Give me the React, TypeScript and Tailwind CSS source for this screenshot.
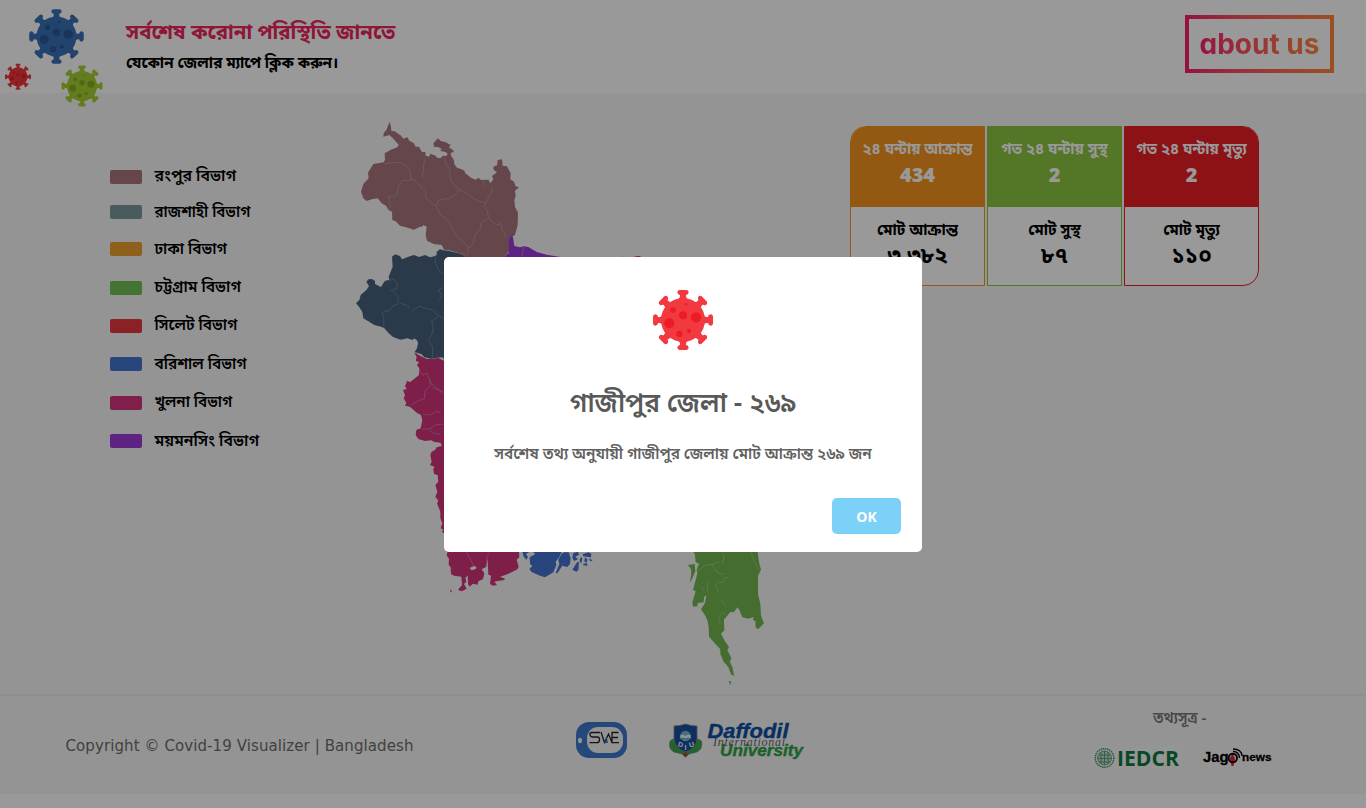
import React from 'react';

type VirusProps = { cx: number; cy: number; size: number; body: string; spot: string };

function Virus({ cx, cy, size, body, spot }: VirusProps) {
  return (
    <g transform={`translate(${cx} ${cy}) scale(${size / 180})`}>
      {[0, 45, 90, 135, 180, 225, 270, 315].map((a) => (
        <g key={a} transform={`rotate(${a})`} fill={body}>
          <rect x={-8} y={-82} width={16} height={28} />
          <path d="M-11 -90H11Q17 -89 17 -82Q16 -76 9 -75Q8 -68 13 -62H-13Q-8 -68 -9 -75Q-16 -76 -17 -82Q-17 -89 -11 -90Z" />
        </g>
      ))}
      <circle r={66} fill={body} />
      <g fill={spot}>
        <circle cx={-41} cy={10} r={15} />
        <circle cx={39} cy={-8} r={15.5} />
        <circle cx={0} cy={-14} r={12} />
        <circle cx={-30} cy={-30} r={8.5} />
        <circle cx={-11} cy={42} r={9.5} />
        <circle cx={18} cy={33} r={6.5} />
        <circle cx={9} cy={-47} r={4} />
      </g>
    </g>
  );
}

const bn = "font-['Noto_Sans_Bengali','Noto_Sans','Open_Sans',sans-serif]";

const legend = [
  { name: 'রংপুর বিভাগ', color: 'bg-[#a7757d]', row: 'h-[35px]', w: 'text-[15.8px]' },
  { name: 'রাজশাহী বিভাগ', color: 'bg-[#7b9899]', row: 'h-[36px]', w: 'text-[15.1px]' },
  { name: 'ঢাকা বিভাগ', color: 'bg-[#ee9e30]', row: 'h-[38.4px]', w: 'text-[15.4px]' },
  { name: 'চট্টগ্রাম বিভাগ', color: 'bg-[#73c054]', row: 'h-[38.4px]', w: 'text-[15.6px]' },
  { name: 'সিলেট বিভাগ', color: 'bg-[#e63a3e]', row: 'h-[38.4px]', w: 'text-[15.4px]' },
  { name: 'বরিশাল বিভাগ', color: 'bg-[#4373d0]', row: 'h-[38.4px]', w: 'text-[15.4px]' },
  { name: 'খুলনা বিভাগ', color: 'bg-[#d6357f]', row: 'h-[38.4px]', w: 'text-[15.2px]' },
  { name: 'ময়মনসিং বিভাগ', color: 'bg-[#9d39da]', row: 'h-[38.4px]', w: 'text-[15.8px]' },
];

const cards = [
  { t: '২৪ ঘন্টায় আক্রান্ত', n: '434', t2: 'মোট আক্রান্ত', n2: '৩,৩৮২', bg: 'bg-[#f59520]', border: 'border-[#f59520]', round: 'rounded-l-[16px]' },
  { t: 'গত ২৪ ঘন্টায় সুস্থ', n: '2', t2: 'মোট সুস্থ', n2: '৮৭', bg: 'bg-[#8cc641]', border: 'border-[#8cc641]', round: '' },
  { t: 'গত ২৪ ঘন্টায় মৃত্যু', n: '2', t2: 'মোট মৃত্যু', n2: '১১০', bg: 'bg-[#eb1e23]', border: 'border-[#eb1e23]', round: 'rounded-r-[16px]' },
];

function BangladeshMap() {
  return (
    <svg className="block h-[585px] w-[430px]" viewBox="345 110 430 585">
      <g transform="translate(345 110) scale(.33333)">
        <path fill="#a7757d" d="M134 35L138 50 139 63 150 64 160 72 166 75 175 86 187 82 193 92 207 100 212 110 222 110 231 127 241 125 242 137 252 140 256 131 272 137 276 143 286 145 294 137 304 138 308 132 302 126 286 123 290 117 281 112 267 110 265 100 272 92 279 85 287 93 303 97 311 102 317 104 312 112 325 121 326 127 317 128 319 139 327 150 328 163 336 173 350 178 358 182 361 190 380 205 393 209 400 203 408 210 430 209 436 220 445 208 441 198 456 187 446 180 445 170 456 166 458 150 471 148 473 167 486 169 497 190 496 208 507 215 512 229 522 232 510 242 512 258 508 270 510 290 519 308 518 345 510 375 502 380 497 376 492 390 492 425 478 440 470 450 340 450 339 428 310 420 297 419 290 405 266 402 246 392 242 375 245 350 235 345 232 350 225 350 207 359 180 351 165 347 152 334 142 330 141 305 130 300 124 288 110 280 98 265 80 268 65 273 55 265 48 245 55 222 71 205 69 188 85 162 116 157 120 150 119 130 136 120 157 112 161 105 153 95 143 84 133 75 115 80 116 70 124 60Z" />
        <path fill="#46627d" d="M275 425L285 418 295 421 310 422 340 430 360 440 360 744 297 748 292 742 270 744 258 746 238 742 230 733 209 726 216 715 219 700 217 692 208 685 203 690 187 685 168 689 158 686 143 680 130 668 118 655 108 650 88 645 70 634 55 625 52 606 42 590 33 580 43 570 47 555 64 540 72 529 64 515 70 508 81 507 90 513 90 522 108 531 115 520 120 512 133 510 131 500 139 480 143 470 141 440 150 433 165 438 171 448 190 440 207 435 222 441 240 435 255 442 268 439 275 435Z" />
        <path fill="#9d39da" d="M478 440L492 428 491 390 498 374 504 382 508 408 525 412 536 409 550 411 575 426 605 434 700 450 470 450Z" />
        <path fill="#e63535" d="M820 444L829 440 845 442 865 441 880 437 892 442 892 450 816 450Z" />
        <g fill="none" stroke="#c9afb4" strokeWidth="1.6">
          <path d="M120 161L145 157 170 159 184 169 195 181 199 208 210 212 222 221 233 238 241 245 242 263 256 277 274 289M199 208L190 212 171 212 160 229 158 249 149 260 130 260 137 285 134 299M239 145L235 178 232 203M298 142L303 162 316 177 312 190 319 213 333 229 343 240 356 245 389 267 405 275 424 279 430 263 442 244 438 229M343 238L330 254 316 265 281 270 274 289 286 314 311 333 320 354 333 375 355 395 370 411M424 279L416 290 426 300 431 323 407 340 409 354 390 376 385 396 379 410 368 412 372 426 364 434 342 430M431 323L444 338 457 345 467 340 471 360 480 370 482 387" />
          <path d="M536 410L531 440M416 207L414 227" />
        </g>
        <g fill="none" stroke="#8e9daa" strokeWidth="1.6">
          <path d="M133 512L145 507 157 518 155 536 136 542M142 542L160 560 157 570 167 580 190 588 193 596M160 580L143 589 135 601 111 607 117 629 116 654M202 602L224 589 245 596 268 601 275 614 297 626M273 440L270 458 282 482 295 492M295 532L280 540 291 558 281 570M280 620L260 633 265 654 260 676 250 690 263 710 262 743" />
        </g>
      </g>
      <g transform="translate(395 340) scale(.33333)">
        <path fill="#d0357a" d="M58 37L75 47 95 57 110 56 130 54 147 62 300 100 390 636 372 636 373 652 365 659 371 680 367 688 350 697 333 704 315 710 330 716 328 720 308 723 298 725 306 735 294 737 285 732 288 707 280 704 278 657 273 681 260 688 268 700 264 718 250 724 248 734 233 731 225 740 219 733 221 705 211 713 214 725 207 732 215 746 200 754 189 749 201 735 199 710 177 707 168 702 167 682 161 674 162 656 155 646 158 634 147 580 140 575 146 570 137 565 142 550 136 535 136 515 130 500 126 490 130 482 121 470 127 455 121 435 130 425 128 405 117 402 115 388 118 380 105 375 110 365 106 345 110 335 120 330 125 322 140 318 137 308 118 306 108 301 90 303 70 297 62 285 64 270 77 265 82 240 78 225 65 218 50 205 45 200 30 197 34 188 26 175 30 165 24 150 35 147 30 139 37 122 45 127 60 115 72 105 73 85 66 75 72 67 62 62 65 52Z" />
        <path fill="#d0357a" d="M165 748L171 753 167 758ZM222 688L230 707 232 728 222 733 218 716Z" />
        <path fill="#f7f7f7" d="M225 683L238 677 246 684 235 690 228 690Z" />
        <path fill="#4373d0" d="M382 635L404 635 393 642 399 651 394 659 386 650ZM404 652L421 642 413 635 500 635 493 651 482 665 484 675 475 697 450 712 435 707 410 696 403 686 412 679 405 671ZM500 641L508 637 521 637 527 655 525 672 517 681 502 677 487 700 482 699 493 672 490 659ZM535 639L549 635 552 644 541 650 549 658 537 663 532 653ZM546 667L552 666 550 690 544 695 532 689ZM555 655L562 652 560 668 554 667ZM563 643L580 637 589 642 588 652 574 650 565 649ZM570 652L578 659 574 668 568 664ZM583 654L593 662 585 664ZM563 672L575 669 578 678 567 676Z" />
        <g fill="none" stroke="#dfa0bf" strokeWidth="1.5">
          <path d="M72 90L85 106 95 98 102 115 111 132 130 148 143 162M102 118L107 137 90 152 88 176 70 182 49 195M110 142L132 150 145 156M83 222L107 225 124 214 137 218M79 268L104 266 121 255 145 252M104 269L112 279 137 284M214 636L228 662 237 680M281 639L275 655 276 680" />
        </g>
      </g>
      <g transform="translate(670 530) scale(.33333)">
        <path fill="#73b650" d="M68 60L262 60 267 97 273 119 264 137 264 193 271 222 273 257 282 280 264 298 257 292 256 273 249 270 251 261 235 266 217 262 209 242 203 232 191 247 181 246 162 269 163 301 153 311 164 332 177 351 172 360 184 384 180 396 187 411 193 439 183 433 175 411 161 395 151 372 151 358 137 343 117 320 116 291 112 271 105 256 93 238 105 219 109 195 102 202 101 217 83 219 82 229 69 230 67 217 77 184 69 180 82 131 80 119 87 101 77 97 75 75Z" />
        <path fill="#73b650" d="M54 105L74 102 76 124 64 151 60 157 64 129 63 118ZM176 453L182 453 183 459 180 466 179 460Z" />
        <g fill="none" stroke="#b7d5a8" strokeWidth="1.6">
          <path d="M242 67L252 92 268 123M157 69L163 83 156 101M82 124L104 107 124 103 141 98 149 96M126 102L139 125 151 132 162 132M176 142L162 144 161 156 145 157 136 165 147 188M113 154L112 185M93 170L101 181 99 183M155 209L165 225M166 255L158 245 146 263 150 280" />
        </g>
      </g>
    </svg>
  );
}

function SweLogo() {
  return (
    <svg className="block h-[38px] w-[52px]" viewBox="575 721 52 38">
      <rect x="576" y="722" width="51" height="36" rx="13" fill="#3c78cc" />
      <rect x="587" y="727" width="36" height="26" rx="11" fill="#f5f5f5" />
      <ellipse cx="580" cy="740.5" rx="2" ry="2.8" fill="#f5f5f5" />
      <path d="M600 732.5H591.5Q589.5 733 590 735Q590.500 737 592.500 737H597.500Q600 737.500 599.500 740Q599 742.700 597 742.700H589.500M601 732L604.500 742.500 608.500 734 612 742.500V733M618.500 732.500H612V742.700H619M612 737.500H618" fill="none" stroke="#252525" strokeWidth="1.3" />
      <path d="M604 743L607 738 608 743Z" fill="#3c78cc" />
    </svg>
  );
}

function DaffodilLogo() {
  return (
    <svg className="block h-[42px] w-[138px]" viewBox="668 720 138 42">
      <path d="M670 741Q668 749 674 752L682 754 685.500 757.500 689 754 697 752Q703 749 701.500 741L696 738 693 746 685.500 751 678 746 675 738Z" fill="#3ba64a" stroke="#777" strokeWidth=".6" />
      <path d="M674 726Q680 726 685.500 724Q691 726 697 726V738Q697 748 685.500 752Q674 748 674 738Z" fill="#17509e" stroke="#888" strokeWidth=".8" />
      <circle cx="685.500" cy="736" r="5.300" fill="#73bad9" />
      <path d="M680 735Q683 733 685.500 735.500Q688 733 691 735V739Q688 737 685.500 739Q683 737 680 739Z" fill="#e9f5f8" stroke="#39779a" strokeWidth=".5" />
      <g fill="#fff" fontFamily="Liberation Sans" fontWeight="700" fontSize="7">
        <text x="678" y="747" transform="rotate(15 680.500 744.500)">D</text><text x="684.500" y="750">I</text><text x="689" y="747" transform="rotate(-15 691 744.500)">U</text>
      </g>
      <circle cx="685.500" cy="754.300" r="1.800" fill="#df252b" />
      <g fontFamily="Liberation Sans" fontWeight="700" fontStyle="italic">
        <text x="707.500" y="738" fontSize="20.500" textLength="81" lengthAdjust="spacingAndGlyphs" fill="#0d50a2" stroke="#0d50a2" strokeWidth=".4">Daffodil</text>
        <text x="720" y="756" fontSize="16" textLength="83" lengthAdjust="spacingAndGlyphs" fill="#2da447" stroke="#2da447" strokeWidth=".4">University</text>
      </g>
      <text x="713" y="746" fontFamily="Liberation Serif" fontStyle="italic" fontSize="12" textLength="72" fill="#666">International</text>
    </svg>
  );
}

function IedcrLogo() {
  return (
    <svg className="block h-[24px] w-[92px] overflow-visible bg-[#f9f9f9]" viewBox="1091 746 92 24">
      <circle cx="1104.500" cy="758" r="9.300" fill="none" stroke="#45966d" strokeWidth="1.500" strokeDasharray="1.500 .7" />
      <circle cx="1104.500" cy="758" r="7" fill="#c6dccf" stroke="#45966d" strokeWidth=".8" />
      <path d="M1101 752V764M1108 752V764M1104.500 751V765M1099 755H1110M1098 758.500H1111M1099 762H1110" stroke="#45966d" strokeWidth=".8" />
      <text x="1117" y="765.500" fontFamily="Open Sans" fontWeight="700" fontSize="22" textLength="62" lengthAdjust="spacingAndGlyphs" fill="#0d7a41">IEDCR</text>
    </svg>
  );
}

function JagoLogo() {
  return (
    <svg className="block h-[24px] w-[72px]" viewBox="1201 748 72 24">
      <g fontFamily="Liberation Sans" fontWeight="700" fill="#000" stroke="#000" strokeWidth=".3">
        <text x="1203" y="764" fontSize="15" textLength="25.500" lengthAdjust="spacingAndGlyphs">Jag</text>
        <text x="1242" y="763" fontSize="11.500" textLength="29.500" lengthAdjust="spacingAndGlyphs">news</text>
      </g>
      <path d="M1232.500 756Q1236 760 1234.500 763L1233.500 768H1231.500L1230.500 763Q1229 760 1232.500 756Z" fill="#e2232b" />
      <circle cx="1232.800" cy="760" r="4.200" fill="none" stroke="#000" strokeWidth="1.900" />
      <path d="M1233 753.500Q1239 753.500 1239.500 760M1233 751Q1241.500 751 1242 758" fill="none" stroke="#000" strokeWidth="1.300" />
    </svg>
  );
}

export default function App() {
  return (
    <div className={`relative flex h-[808px] w-[1366px] flex-col overflow-hidden bg-white ${bn}`}>
      <header className="relative z-10 flex h-[93px] shrink-0 items-start bg-white">
        <svg className="block h-[110px] w-[126px] shrink-0 overflow-visible" viewBox="0 0 126 110">
          <Virus cx={56.500} cy={36.500} size={54.500} body="#3870b6" spot="#295a98" />
          <Virus cx={18} cy={76.800} size={26} body="#f13a42" spot="#ed1c24" />
          <Virus cx={82} cy={86} size={41} body="#a5d032" spot="#86ad22" />
        </svg>
        <div className="flex flex-col pt-[16px]">
          <h1 className="h-[35px] whitespace-nowrap text-[20.4px] font-bold leading-[36px] text-[#ee265a]">সর্বশেষ করোনা পরিস্থিতি জানতে</h1>
          <p className="h-[26px] whitespace-nowrap text-[15.2px] font-bold leading-[26px] text-black">যেকোন জেলার ম্যাপে ক্লিক করুন।</p>
        </div>
        <div className="ml-auto mr-[32px] mt-[15px] h-[58px] w-[149px] bg-linear-to-r from-[#fa196c] to-[#ff853a] p-[4px]">
          <div className="flex h-full items-center justify-center bg-white">
            <span className="bg-linear-to-r from-[#fa196c] to-[#ff853a] bg-clip-text font-['Inter',sans-serif] text-[28px] font-bold leading-[40px] text-transparent [font-feature-settings:'cv11']">about us</span>
          </div>
        </div>
      </header>

      <main className="flex h-[603px] shrink-0 items-start border-b-2 border-[#eeeeee] bg-[#f7f7f7]">
        <div className="ml-[110px] mt-[66px] flex w-[235px] flex-col">
          {legend.map((l) => (
            <div key={l.name} className={`flex items-center gap-[12.5px] ${l.row}`}>
              <span className={`h-[14px] w-[32px] rounded-[2px] ${l.color}`} />
              <span className={`whitespace-nowrap pt-px font-semibold leading-[24px] text-black ${l.w}`}>{l.name}</span>
            </div>
          ))}
        </div>
        <div className="mt-[17px]"><BangladeshMap /></div>
        <div className="ml-[75px] mt-[33px] flex gap-[2px]">
          {cards.map((c) => (
            <section key={c.t} className={`flex h-[160px] w-[135px] flex-col overflow-hidden border bg-white text-center font-bold ${c.border} ${c.round}`}>
              <div className={`flex h-[80px] shrink-0 flex-col items-center pt-[9px] text-[#ffffff] ${c.bg}`}>
                <span className="whitespace-nowrap text-[15px] leading-[28px]">{c.t}</span>
                <span className="-mt-[2px] font-['Open_Sans',sans-serif] text-[20px] font-extrabold leading-[26px]">{c.n}</span>
              </div>
              <div className="flex flex-col items-center pt-[10px] text-black">
                <span className="whitespace-nowrap text-[15.2px] leading-[28px]">{c.t2}</span>
                <span className="text-[22px] leading-[26px]">{c.n2}</span>
              </div>
            </section>
          ))}
        </div>
      </main>

      <footer className="flex h-[98px] shrink-0 items-start bg-[#f7f7f7]">
        <p className="ml-[65.5px] mt-[38px] w-[509.5px] whitespace-nowrap font-['DejaVu_Sans',sans-serif] text-[15px] leading-[24px] tracking-[0.09px] text-[#6d6d6d]">Copyright © Covid-19 Visualizer | Bangladesh</p>
        <div className="mt-[25px] w-[93px]"><SweLogo /></div>
        <div className="mt-[24px]"><DaffodilLogo /></div>
        <div className="ml-[285px] mt-[10px] flex w-[182px] flex-col">
          <p className="h-[28px] pl-[62px] text-[15px] font-semibold leading-[26px] text-[#777777]">তথ্যসূত্র -</p>
          <div className="mt-[12px] flex items-center gap-[18px]"><IedcrLogo /><JagoLogo /></div>
        </div>
      </footer>

      <div className="absolute inset-0 z-20 flex items-start justify-center bg-black/40">
        <div role="dialog" className="mt-[257px] flex h-[295px] w-[478px] flex-col items-center rounded-[5px] bg-white">
          <svg className="mt-[32px] block h-[62px] w-[62px]" viewBox="-31 -31 62 62">
            <Virus cx={0} cy={0} size={60} body="#f1393f" spot="#ed1c24" />
          </svg>
          <h2 className="mt-[34px] whitespace-nowrap text-[26.2px] font-semibold leading-[42px] text-[#595959]">গাজীপুর জেলা - ২৬৯</h2>
          <p className="mt-[14px] whitespace-nowrap text-[15.35px] font-semibold leading-[28px] text-[#616161]">সর্বশেষ তথ্য অনুযায়ী গাজীপুর জেলায় মোট আক্রান্ত ২৬৯ জন</p>
          <button className="mr-[21px] mt-[29px] h-[36px] w-[69px] self-end rounded-[5px] bg-[#7cd1f9] font-['Open_Sans',sans-serif] text-[14px] font-bold text-white">OK</button>
        </div>
      </div>
    </div>
  );
}
